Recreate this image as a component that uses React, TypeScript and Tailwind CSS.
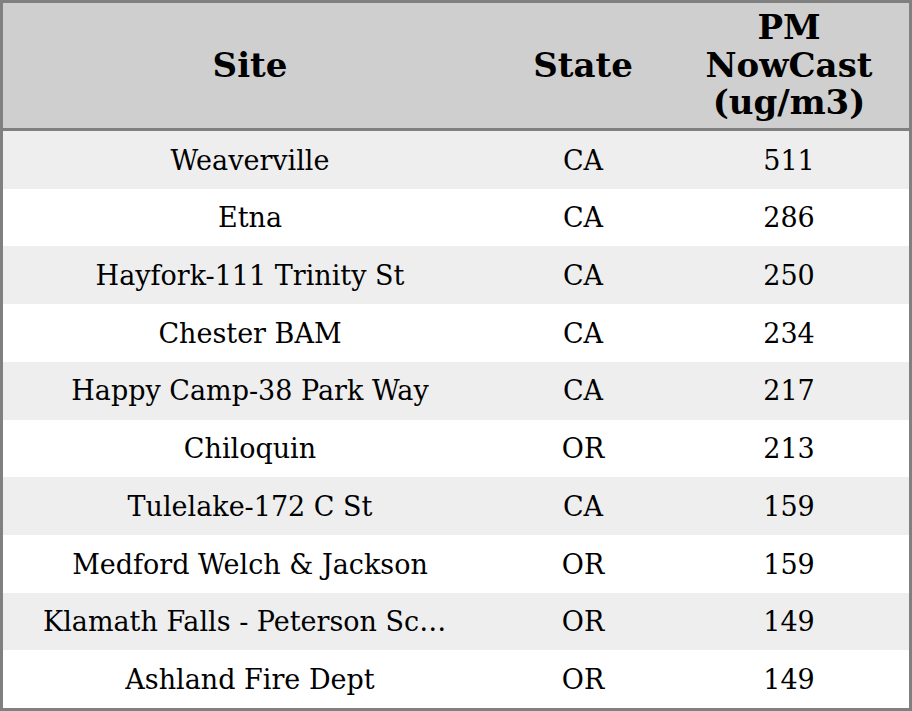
const rows = [
  { site: "Weaverville", state: "CA", pm: 511 },
  { site: "Etna", state: "CA", pm: 286 },
  { site: "Hayfork-111 Trinity St", state: "CA", pm: 250 },
  { site: "Chester BAM", state: "CA", pm: 234 },
  { site: "Happy Camp-38 Park Way", state: "CA", pm: 217 },
  { site: "Chiloquin", state: "OR", pm: 213 },
  { site: "Tulelake-172 C St", state: "CA", pm: 159 },
  { site: "Medford Welch & Jackson", state: "OR", pm: 159 },
  { site: "Klamath Falls - Peterson School", state: "OR", pm: 149 },
  { site: "Ashland Fire Dept", state: "OR", pm: 149 },
]

export default function App() {
  return (
    <div
      className="flex h-[711px] w-[912px] flex-col border-[3px] border-[#808080] bg-white text-black"
      style={{ fontFamily: '"DejaVu Serif", serif' }}
    >
      <div className="flex h-[128px] shrink-0 items-center border-b-[3px] border-[#808080] bg-[#cfcfcf] text-[34px] leading-[37.5px] font-bold">
        <div className="w-[494px] text-center">Site</div>
        <div className="w-[172px] text-center">State</div>
        <div className="w-[240px] text-center">
          PM
          <br />
          NowCast
          <br />
          (ug/m3)
        </div>
      </div>

      <div className="flex flex-1 flex-col">
        {rows.map((row, i) => (
          <div
            key={i}
            className={
              "flex flex-1 items-center pt-[2px] text-[27px] " +
              (i % 2 === 0 ? "bg-[#eeeeee]" : "bg-white")
            }
          >
            <div className="w-[494px] truncate px-[40px] text-center">{row.site}</div>
            <div className="w-[172px] text-center">{row.state}</div>
            <div className="w-[240px] text-center">{row.pm}</div>
          </div>
        ))}
      </div>
    </div>
  )
}
